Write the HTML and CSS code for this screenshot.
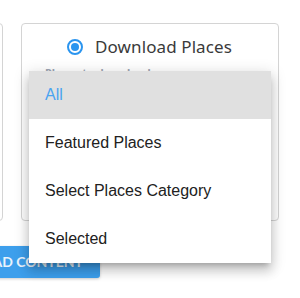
FILE: index.html
```html
<!doctype html>
<html>
<head>
<meta charset="UTF-8">
<title>Download</title>
<link rel="stylesheet" href="styles.css">
</head>
<body>
<div id="wrap">
	<div class="cards">
		<div class="card card-side"></div>
		<div class="card">
			<label class="option">
				<span class="radio"><span class="dot"></span></span>
				<span class="option-text">Download Places</span>
			</label>
			<p class="field-label">Places to download</p>
		</div>
	</div>
	<div class="actions">
		<div class="btn">Download Content</div>
	</div>
	<ul class="menu">
		<li class="active">All</li>
		<li>Featured Places</li>
		<li>Select Places Category</li>
		<li>Selected</li>
	</ul>
</div>
</body>
</html>
```

FILE: styles.css
```css
*{
	margin:0;
	padding:0;
	box-sizing:border-box;
}
ul{
	list-style:none;
}
body{
	background:#fff;
	font-family:"Liberation Sans", Arial, sans-serif;
	overflow:hidden;
}
#wrap{
	position:relative;
	width:300px;
	height:298px;
	padding-top:23px;
	overflow:hidden;
}
.cards{
	display:flex;
	gap:18px;
	margin-left:-40px;
}
.card{
	width:258px;
	height:198px;
	border:1px solid #d4d4d4;
	border-radius:4px;
	background:#fff;
	padding-top:12px;
}
.card-side{
	width:43px;
}
.option{
	display:flex;
	align-items:center;
	justify-content:center;
	height:21px;
	padding-right:1px;
}
.radio{
	display:flex;
	align-items:center;
	justify-content:center;
	width:16px;
	height:16px;
	border:2px solid #2b95ef;
	border-radius:50%;
	margin-right:12px;
}
.radio .dot{
	width:8px;
	height:8px;
	border-radius:50%;
	background:#2b95ef;
}
.option-text{
	font-family:"Noto Sans", sans-serif;
	font-size:17px;
	color:#3a3a3a;
	letter-spacing:0.1px;
}
.field-label{
	margin:8px 0 0 23px;
	font-family:"Noto Sans", sans-serif;
	font-size:11px;
	font-weight:bold;
	color:#9ea6b4;
}
.actions{
	margin:25px 0 0 -100px;
}
.btn{
	width:200px;
	height:32px;
	line-height:32px;
	background:#3d9fec;
	color:#e9f3fc;
	border-radius:3px;
	font-family:Lato, sans-serif;
	font-size:14px;
	font-weight:bold;
	text-transform:uppercase;
	text-align:right;
	white-space:nowrap;
	padding-right:17px;
	box-shadow:0 1px 3px rgba(0,0,0,.2);
}
.menu{
	position:absolute;
	left:29px;
	top:71px;
	width:242px;
	background:#fff;
	box-shadow:0 5px 5px -3px rgba(0,0,0,.2),0 8px 10px 1px rgba(0,0,0,.14),0 3px 14px 2px rgba(0,0,0,.12);
}
.menu li{
	height:48px;
	line-height:48px;
	padding-left:16px;
	font-size:16px;
	color:#212121;
}
.menu li.active{
	background:#e0e0e0;
	color:#4aa3f0;
}
```
